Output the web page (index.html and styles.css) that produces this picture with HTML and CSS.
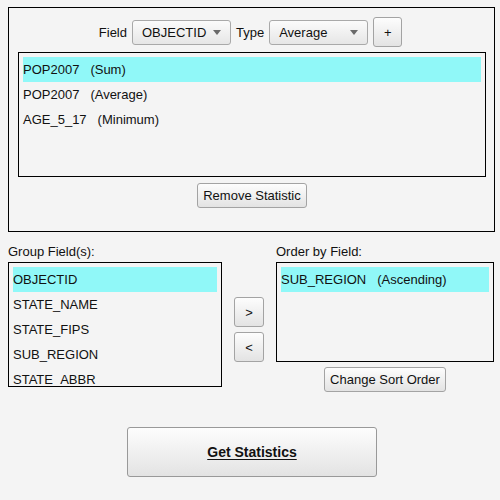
FILE: index.html
```html
<!DOCTYPE html>
<html>
<head>
<meta charset="utf-8">
<link rel="stylesheet" href="styles.css">
</head>
<body>
<div class="panel">
  <div class="toolbar">
    <span class="lbl">Field</span>
    <div class="combo"><span>OBJECTID</span><span class="arrow"></span></div>
    <span class="lbl">Type</span>
    <div class="combo"><span>Average</span><span class="arrow"></span></div>
    <div class="btn plus">+</div>
  </div>
  <div class="list stats">
    <div class="row sel"><span class="f">POP2007</span><span>(Sum)</span></div>
    <div class="row"><span class="f">POP2007</span><span>(Average)</span></div>
    <div class="row"><span class="f">AGE_5_17</span><span>(Minimum)</span></div>
  </div>
  <div class="center"><div class="btn remove">Remove Statistic</div></div>
</div>
<div class="lower">
  <div class="col left">
    <div class="cap">Group Field(s):</div>
    <div class="list group">
      <div class="row sel">OBJECTID</div>
      <div class="row">STATE_NAME</div>
      <div class="row">STATE_FIPS</div>
      <div class="row">SUB_REGION</div>
      <div class="row">STATE_ABBR</div>
    </div>
  </div>
  <div class="mid">
    <div class="btn arr">&gt;</div>
    <div class="btn arr">&lt;</div>
  </div>
  <div class="col right">
    <div class="cap">Order by Field:</div>
    <div class="list order">
      <div class="row sel"><span class="f">SUB_REGION</span><span>(Ascending)</span></div>
    </div>
    <div class="center"><div class="btn sort">Change Sort Order</div></div>
  </div>
</div>
<div class="center bottom"><div class="btn big"><u>Get Statistics</u></div></div>
</body>
</html>
```
FILE: styles.css
```css
html, body {
  margin: 0;
  padding: 0;
  background: #f4f4f4;
  font-family: "Liberation Sans", Arial, sans-serif;
  font-size: 13px;
  color: #111;
  width: 500px;
  height: 500px;
  overflow: hidden;
}
.panel {
  box-sizing: border-box;
  margin: 7px 0 0 8px;
  width: 487px;
  height: 225px;
  border: 1px solid #000;
  padding: 9px 8px 0 9px;
}
.toolbar {
  display: flex;
  align-items: center;
  justify-content: center;
  height: 30px;
  padding-right: 3px;
}
.lbl { margin: 0 5px 0 0; }
.combo + .lbl { margin-left: 5px; }
.combo {
  box-sizing: border-box;
  width: 99px;
  height: 25px;
  border: 1px solid #a9a9a9;
  border-radius: 3px;
  background: linear-gradient(#fbfbfb, #e6e6e6);
  display: flex;
  align-items: center;
  justify-content: space-between;
  padding: 0 9px 0 9px;
}
.arrow {
  width: 0;
  height: 0;
  border-left: 4px solid transparent;
  border-right: 4px solid transparent;
  border-top: 5px solid #6a6a6a;
}
.btn {
  box-sizing: border-box;
  border: 1px solid #a3a3a3;
  border-radius: 3px;
  background: linear-gradient(#fdfdfd, #e3e3e3);
  display: flex;
  align-items: center;
  justify-content: center;
}
.plus { width: 29px; height: 30px; margin-left: 5px; }
.list {
  box-sizing: border-box;
  border: 1px solid #000;
  padding: 4px;
  overflow: hidden;
}
.stats { margin-top: 5px; height: 125px; }
.row {
  height: 25px;
  display: flex;
  align-items: center;
  white-space: nowrap;
}
.row.sel { background: #90f8f8; }
.f { margin-right: 11px; }
.center { display: flex; justify-content: center; }
.panel .center { margin-top: 6px; }
.remove { width: 110px; height: 25px; }
.lower {
  display: flex;
  margin: 13px 0 0 8px;
}
.col { display: flex; flex-direction: column; }
.cap { height: 17px; line-height: 14px; }
.left { width: 214px; }
.group { height: 125px; }
.mid {
  width: 54px;
  display: flex;
  flex-direction: column;
  align-items: center;
  padding-top: 52px;
  gap: 5px;
}
.arr { width: 30px; height: 30px; }
.right { width: 218px; }
.order { height: 100px; }
.right .center { margin-top: 5px; }
.sort { width: 122px; height: 25px; }
.bottom { padding-left: 4px; }
.big {
  margin-top: 35px;
  width: 250px;
  height: 50px;
  font-weight: bold;
  font-size: 14px;
  border-color: #999;
}
.big u { text-underline-offset: 2px; }
```
